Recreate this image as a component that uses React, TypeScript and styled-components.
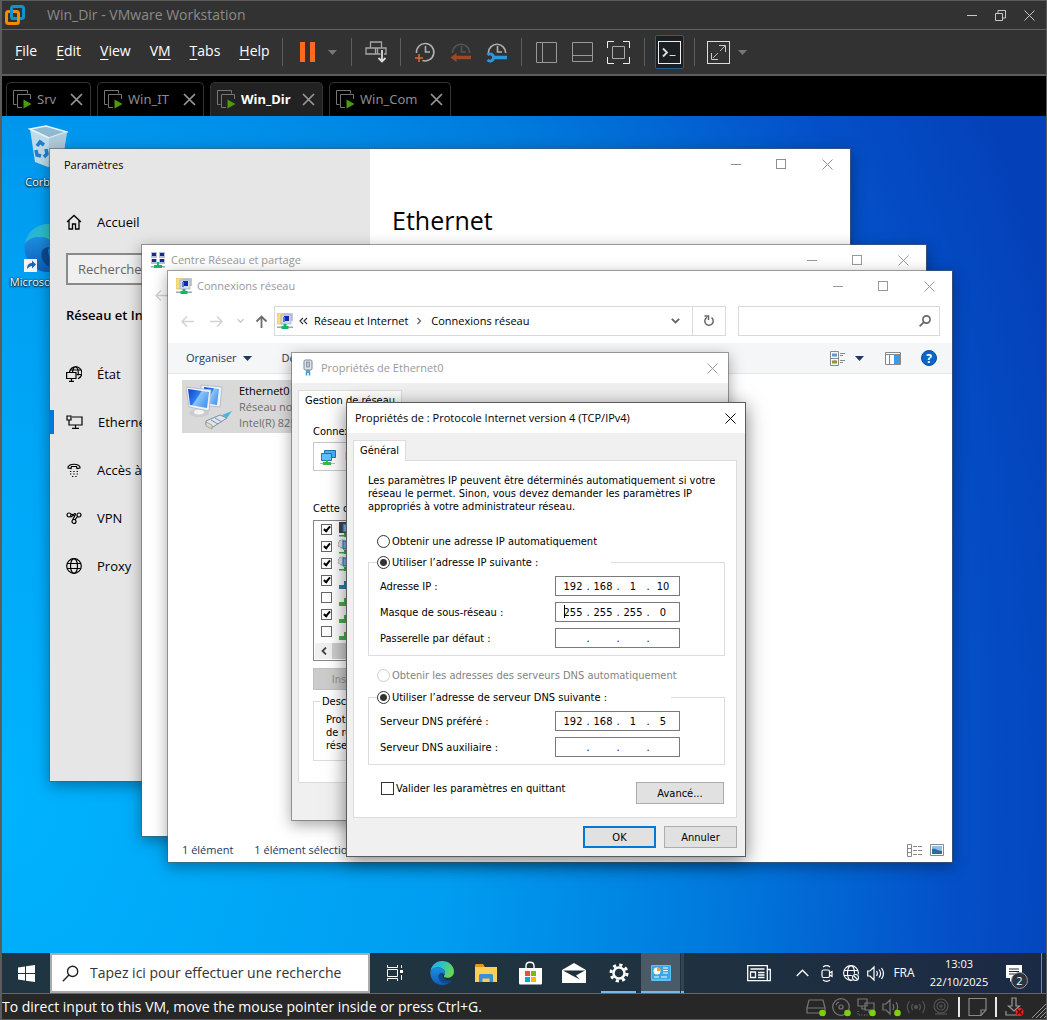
import React from "react";
import styled, { createGlobalStyle, css } from "styled-components";

const UI = '"Open Sans", "Noto Sans", sans-serif';
const DLG = '"DejaVu Sans Condensed", "Noto Sans", sans-serif';

const Global = createGlobalStyle`
  *, *::before, *::after { box-sizing: border-box; }
  html, body { margin: 0; padding: 0; background: #000; }
  body { font-family: ${UI}; font-size: 11px; line-height: 16px; color: #000; }
  button, input { font: inherit; color: inherit; }
  button { background: none; border: 0; padding: 0; margin: 0; display: flex; align-items: center; justify-content: center; }
  fieldset { margin: 0; min-width: 0; }
  p, h1, h2, ul { margin: 0; padding: 0; font-weight: 400; list-style: none; }
  svg { display: block; flex: none; }
`;

/* ---------- host application ---------- */

const Host = styled.div`
  min-height: 100vh;
  display: flex;
  flex-direction: column;
  background: #323232;
  border: solid #5c5c5c;
  border-width: 1px 1px 2px 2px;
  overflow: hidden;
`;

const HostTitle = styled.header`
  height: 29px;
  display: flex;
  align-items: center;
  padding: 0 2px 0 3px;
  border-bottom: 1px solid #636363;
  color: #8b8b8b;
`;

const HostName = styled.h1`
  flex: 1;
  margin-left: 22px;
  font-size: 14px;
  line-height: 20px;
`;

const HostControl = styled.button`
  width: 29px;
  height: 28px;
  color: #c8c8c8;
`;

const HostBar = styled.div`
  height: 46px;
  display: flex;
  align-items: center;
  border-bottom: 2px solid #5e5e5e;
`;

const MenuBar = styled.nav`
  display: flex;
  gap: 19px;
  padding: 0 12px 2px 13px;
  color: #fff;
  font-size: 14px;
  line-height: 20px;
  u { text-underline-offset: 3px; }
`;

const Separator = styled.span`
  width: 1px;
  height: 28px;
  background: #5d5d5d;
`;

const ToolGroup = styled.div<{ $gap?: number; $pad: string }>`
  display: flex;
  align-items: center;
  gap: ${(p) => p.$gap ?? 12}px;
  padding: 0 ${(p) => p.$pad};
`;

const Tool = styled.button<{ $active?: boolean }>`
  width: 24px;
  height: 34px;
  ${(p) =>
    p.$active &&
    css`
      width: 29px;
      border: 1px solid #245f8f;
      border-radius: 2px;
      background: #1c1f22;
    `}
`;

const ToolCaret = styled.button`
  width: 10px;
  height: 24px;
`;

const Tabs = styled.div`
  height: 40px;
  display: flex;
  align-items: flex-end;
  gap: 6px;
  padding-left: 4px;
  background: #000;
`;

const Tab = styled.div<{ $active?: boolean; $w: number }>`
  height: 34px;
  width: ${(p) => p.$w}px;
  display: flex;
  align-items: center;
  padding: 0 7px 1px 6px;
  border: 1px solid #333;
  border-bottom: 0;
  border-radius: 5px 5px 0 0;
  color: ${(p) => (p.$active ? "#fff" : "#8c8c8c")};
  background: ${(p) => (p.$active ? "#222" : "#000")};
  font-size: 13px;
  font-family: "Noto Sans", sans-serif;
  font-weight: ${(p) => (p.$active ? 700 : 400)};
`;

const TabName = styled.button`
  flex: 1;
  justify-content: flex-start;
  gap: 5px;
`;

/* ---------- guest desktop ---------- */

const Desktop = styled.main`
  position: relative;
  flex: 1;
  min-height: 837px;
  overflow: hidden;
  background: radial-gradient(
    ellipse 1120px 1500px at 0 680px,
    #00b3ff 0%,
    #009df1 40%,
    #0078dc 65%,
    #0450c8 85%,
    #0440b8 100%
  );
`;

const DeskIcon = styled.button<{ $y: number }>`
  position: absolute;
  left: 0;
  top: ${(p) => p.$y}px;
  width: 92px;
  flex-direction: column;
  gap: 2px;
  color: #fff;
  font-size: 11px;
  text-shadow: 0 1px 2px #000, 0 0 2px #000;
  white-space: nowrap;
`;

const Window = styled.section<{ $x: number; $y: number; $w: number; $h: number; $focus?: boolean }>`
  position: absolute;
  left: ${(p) => p.$x}px;
  top: ${(p) => p.$y}px;
  width: ${(p) => p.$w}px;
  height: ${(p) => p.$h}px;
  display: flex;
  flex-direction: column;
  overflow: hidden;
  background: #fff;
  border: 1px solid ${(p) => (p.$focus ? "#5b5b5b" : "rgba(90, 90, 90, 0.55)")};
  background-clip: padding-box;
  box-shadow: 0 4px ${(p) => (p.$focus ? "18px" : "14px")} rgba(0, 0, 0, ${(p) => (p.$focus ? 0.5 : 0.34)});
`;

const TitleRow = styled.header<{ $focus?: boolean }>`
  height: 30px;
  flex: none;
  display: flex;
  align-items: center;
  padding-left: 8px;
  background: #fff;
  color: ${(p) => (p.$focus ? "#000" : "#999")};
  white-space: nowrap;
`;

const TitleText = styled.h2<{ $gap?: number }>`
  flex: 1;
  margin-left: ${(p) => p.$gap ?? 5}px;
  font-size: 11px;
  line-height: 16px;
`;

const CaptionButton = styled.button<{ $w?: number }>`
  width: ${(p) => p.$w ?? 46}px;
  height: 30px;
`;

/* settings window */

const Settings = styled.div`
  flex: 1;
  display: flex;
`;

const Side = styled.aside`
  width: 320px;
  background: #e6e6e6;
  font-size: 13px;
`;

const SideTitle = styled.p`
  padding: 8px 14px;
  font-size: 11px;
`;

const SideLink = styled.a<{ $active?: boolean; $h?: number }>`
  height: ${(p) => p.$h ?? 48}px;
  display: flex;
  align-items: center;
  gap: 15px;
  padding-left: 16px;
  color: #000;
  text-decoration: none;
  white-space: nowrap;
  background: ${(p) =>
    p.$active ? "linear-gradient(#0078d7, #0078d7) 0 50% / 4px 24px no-repeat" : "none"};
`;

const SideSearch = styled.input`
  display: block;
  width: 288px;
  height: 32px;
  margin: 11px 16px 20px;
  padding: 0 10px;
  border: 2px solid #8a8a8a;
  border-radius: 0;
  background: #f0f0f0;
  &::placeholder { color: #666; opacity: 1; }
`;

const SideHeading = styled.h2`
  padding: 0 16px;
  margin-bottom: 25px;
  font-size: 13px;
  line-height: 20px;
  font-weight: 600;
`;

const SideTop = styled.div`
  padding-top: 21px;
`;

const SettingsMain = styled.div`
  flex: 1;
`;

const PageTitle = styled.h2`
  padding: 21px 22px;
  font-size: 25px;
  line-height: 40px;
`;

const Captions = styled.div`
  display: flex;
  justify-content: flex-end;
  color: #8f8f8f;
`;

/* explorer window */

const NavRow = styled.div`
  display: flex;
  align-items: center;
  padding: 5px 12px 7px 4px;
  color: #d2d2d2;
`;

const NavButton = styled.button<{ $w: number }>`
  width: ${(p) => p.$w}px;
  height: 30px;
`;

const Address = styled.div`
  flex: 1;
  height: 30px;
  display: flex;
  align-items: center;
  gap: 6px;
  margin: 0 12px 0 2px;
  padding-left: 2px;
  border: 1px solid #d9d9d9;
  color: #000;
  white-space: nowrap;
`;

const Crumb = styled.a`
  color: #000;
  text-decoration: none;
  & + svg { margin: 0 3px; }
`;

const AddressTools = styled.div`
  display: flex;
  margin-left: auto;
`;

const AddressEnd = styled.button<{ $line?: boolean }>`
  width: 33px;
  height: 28px;
  border-left: ${(p) => (p.$line ? "1px solid #d9d9d9" : 0)};
`;

const Grow = styled.span`
  flex: 1;
`;

const SearchBox = styled.label`
  width: 202px;
  height: 30px;
  display: flex;
  align-items: center;
  padding-right: 8px;
  border: 1px solid #d9d9d9;
  input { flex: 1; min-width: 0; border: 0; padding: 0 6px; background: none; outline: 0; }
`;

const CommandBar = styled.div`
  height: 31px;
  flex: none;
  display: flex;
  align-items: center;
  padding: 0 15px 0 18px;
  background: #f5f6f7;
  border-bottom: 1px solid #e4e7ea;
  color: #1e395b;
  white-space: nowrap;
`;

const Command = styled.button<{ $ml?: number }>`
  gap: 6px;
  margin-left: ${(p) => p.$ml ?? 0}px;
  height: 24px;
`;

const Content = styled.div`
  flex: 1;
  padding: 6px 14px;
`;

const Adapter = styled.button`
  width: 240px;
  height: 53px;
  justify-content: flex-start;
  gap: 6px;
  padding: 0 4px;
  background: #d9d9d9;
  color: #6d6d6d;
  text-align: left;
  line-height: 16px;
  white-space: nowrap;
  strong { display: block; font-weight: 400; color: #000; }
  span { display: block; }
`;

const ExplorerStatus = styled.footer`
  height: 24px;
  display: flex;
  align-items: center;
  gap: 21px;
  padding: 0 8px 0 14px;
  color: #1e395b;
`;

/* property sheets */

const Sheet = styled.div`
  flex: 1;
  display: flex;
  flex-direction: column;
  padding: 7px 8px 8px 6px;
  background: #f0f0f0;
  font-family: ${DLG};
  font-size: 11px;
  line-height: 13px;
`;

const SheetTab = styled.button`
  position: relative;
  align-self: flex-start;
  height: 21px;
  margin-bottom: -1px;
  padding: 0 6px 1px;
  background: #fff;
  border: 1px solid #dcdcdc;
  border-bottom: 0;
  white-space: nowrap;
`;

const SheetPanel = styled.div<{ $pad: string }>`
  display: flex;
  flex-direction: column;
  padding: ${(p) => p.$pad};
  background: #fff;
  border: 1px solid #dcdcdc;
`;

const Footer = styled.footer`
  display: flex;
  justify-content: flex-end;
  gap: 8px;
  padding-top: 8px;
`;

const PushButton = styled.button<{ $w: number; $default?: boolean }>`
  width: ${(p) => p.$w}px;
  height: 22px;
  flex: none;
  background: #e1e1e1;
  border: ${(p) => (p.$default ? "2px solid #0078d7" : "1px solid #adadad")};
  &:disabled { background: #ccc; border-color: #bfbfbf; color: #8f8f8f; }
`;

const Intro = styled.p`
  margin-bottom: 21px;
`;

const Choice = styled.label<{ $mt?: number; $ml?: number; $off?: boolean }>`
  display: flex;
  align-items: center;
  gap: 2px;
  height: 14px;
  margin-top: ${(p) => p.$mt ?? 0}px;
  margin-left: ${(p) => p.$ml ?? 0}px;
  color: ${(p) => (p.$off ? "#838383" : "#000")};
  white-space: nowrap;
`;

const Radio = styled.input.attrs({ type: "radio" })`
  appearance: none;
  width: 13px;
  height: 13px;
  flex: none;
  margin: 0;
  border: 1px solid #333;
  border-radius: 50%;
  background: #fff;
  &:checked { background: radial-gradient(circle, #333 0 3px, #fff 4px); }
  &:disabled { border-color: #ccc; }
`;

const Check = styled.input.attrs({ type: "checkbox" })<{ $small?: boolean }>`
  appearance: none;
  width: ${(p) => (p.$small ? 11 : 13)}px;
  height: ${(p) => (p.$small ? 11 : 13)}px;
  flex: none;
  margin: 0;
  border: 1px solid ${(p) => (p.$small ? "#666" : "#333")};
  background: #fff;
  display: grid;
  place-items: center;
  &:checked::after {
    content: "";
    width: 4px;
    height: 7px;
    margin-bottom: 2px;
    border: solid #000;
    border-width: 0 2px 2px 0;
    transform: rotate(40deg);
  }
`;

const Group = styled.fieldset<{ $mt: number }>`
  margin-top: ${(p) => p.$mt}px;
  padding: 7px 44px 7px 11px;
  border: 1px solid #dcdcdc;
`;

const Legend = styled.legend<{ $w: number }>`
  width: ${(p) => p.$w}px;
  margin-left: -3px;
  padding: 0;
`;

const IpRow = styled.div`
  display: flex;
  align-items: center;
  justify-content: space-between;
  & + & { margin-top: 6px; }
`;

const IpBox = styled.div`
  width: 125px;
  height: 20px;
  display: flex;
  align-items: center;
  padding-left: 5px;
  border: 1px solid #7a7a7a;
  background: #fff;
`;

const Octet = styled.input`
  width: 24px;
  height: 16px;
  padding: 0;
  border: 0;
  background: none;
  text-align: center;
  outline: 0;
`;

const Dot = styled.span`
  width: 6px;
  text-align: center;
`;

const CaretBox = styled.span`
  position: relative;
  display: flex;
  &::before {
    content: "";
    position: absolute;
    left: 3px;
    top: 1px;
    width: 1px;
    height: 13px;
    background: #000;
  }
`;

const LastRow = styled.div`
  display: flex;
  justify-content: space-between;
  align-items: center;
  margin: 17px 1px 0 13px;
`;

const LastChoice = styled(Choice)`
  padding-bottom: 9px;
  height: 22px;
`;

const DeviceBox = styled.div`
  height: 29px;
  display: flex;
  align-items: center;
  gap: 8px;
  margin: 4px 0 31px;
  padding-left: 6px;
  border: 1px solid #c8c8c8;
  white-space: nowrap;
`;

const ItemList = styled.div`
  height: 141px;
  display: flex;
  flex-direction: column;
  margin: 5px 0 7px;
  border: 1px solid #828790;
`;

const Item = styled.label`
  height: 17px;
  display: flex;
  align-items: center;
  gap: 6px;
  padding-left: 7px;
  white-space: nowrap;
`;

const ScrollTrack = styled.div`
  height: 16px;
  margin: auto 1px 1px;
  display: flex;
  background: #f0f0f0;
`;

const ScrollButton = styled.button`
  width: 17px;
`;

const ScrollThumb = styled.span`
  width: 260px;
  background: #cdcdcd;
`;

const Description = styled.fieldset`
  height: 66px;
  margin-top: 5px;
  padding: 5px 12px;
  border: 1px solid #dcdcdc;
  legend { padding: 0 2px; margin-left: -6px; }
  p { white-space: pre; }
`;

/* guest task bar */

const TaskBar = styled.div`
  height: 40px;
  flex: none;
  display: flex;
  background: linear-gradient(90deg, #1f3642, #20323f 60%, #1b2a44);
  color: #fff;
`;

const Task = styled.button<{ $w?: number; $open?: boolean; $active?: boolean }>`
  width: ${(p) => p.$w ?? 44}px;
  height: 40px;
  margin-left: ${(p) => (p.$open ? 5 : 0)}px;
  background: ${(p) => (p.$active ? "#4b5a67" : "none")};
  border-bottom: ${(p) => (p.$open ? "2px solid #76b9ed" : 0)};
  background-clip: padding-box;
  padding-top: ${(p) => (p.$open ? 2 : 0)}px;
`;

const TaskStack = styled.span`
  width: 3px;
  margin-left: 1px;
  background: #35444f;
  border-bottom: 2px solid #76b9ed;
`;

const TaskSearch = styled.label`
  width: 320px;
  display: flex;
  align-items: center;
  gap: 11px;
  padding-left: 10px;
  background: #fff;
  border: 2px solid #a9abac;
  color: #333;
  font-size: 14px;
  input { flex: 1; min-width: 0; border: 0; padding: 0; background: none; outline: 0; }
  input::placeholder { color: #333; opacity: 1; }
`;

const Tray = styled.div`
  flex: 1;
  display: flex;
  align-items: center;
  justify-content: flex-end;
  font-size: 12px;
`;

const TrayButton = styled.button<{ $w: number }>`
  width: ${(p) => p.$w}px;
  height: 40px;
`;

const Clock = styled.button`
  width: 76px;
  height: 40px;
  flex-direction: column;
  font-size: 11px;
  line-height: 18px;
`;

const ShowDesktop = styled.span`
  width: 5px;
  height: 40px;
  border-left: 1px solid #7d8794;
`;

const Badge = styled.span`
  position: absolute;
  right: 13px;
  bottom: 4px;
  width: 17px;
  height: 17px;
  border: 1px solid #999;
  border-radius: 50%;
  background: #2d3440;
  font-size: 11px;
  line-height: 15px;
`;

const Notify = styled.button`
  position: relative;
  width: 44px;
  height: 40px;
  padding-right: 10px;
`;

/* host status bar */

const StatusBar = styled.footer`
  height: 26px;
  display: flex;
  align-items: center;
  border-top: 1px solid #666;
  background: #272727;
  color: #fff;
  font-size: 14px;
`;

const StatusIcons = styled.div`
  flex: 1;
  display: flex;
  align-items: center;
  justify-content: flex-end;
`;

const StatusSeparator = styled.span`
  width: 2px;
  height: 20px;
  background: #e8e8e8;
`;

/* ---------- drawings ---------- */

const Svg = ({ w, h = w, vb, children, sw = 1, fill = "none" }: {
  w: number; h?: number; vb?: string; children: React.ReactNode; sw?: number; fill?: string;
}) => (
  <svg width={w} height={h} viewBox={vb ?? `0 0 ${w} ${h}`} fill={fill} stroke="currentColor" strokeWidth={sw} aria-hidden="true">
    {children}
  </svg>
);

const Logo = () => (
  <svg width="20" height="20" viewBox="0 0 20 20" fill="none" strokeWidth="3">
    <rect x="6.500" y="1.500" width="12" height="12" rx="2" stroke="#0f93cf" />
    <rect x="1.500" y="6.500" width="12" height="12" rx="2" stroke="#f38b00" />
    <path d="M6.500 10V5M6.500 13.500H10" stroke="#0f93cf" />
  </svg>
);

const MinIcon = () => <Svg w={10}><path d="M0 5.500h10" /></Svg>;
const MaxIcon = () => <Svg w={10}><rect x=".5" y=".5" width="9" height="9" /></Svg>;
const CloseIcon = ({ w = 11 }: { w?: number }) => (
  <Svg w={w} vb="0 0 11 11"><path d="M.5.5l10 10M10.500.5l-10 10" /></Svg>
);
const RestoreIcon = () => (
  <Svg w={11}><path d="M.5 3.500h7v7h-7zM3 3V.5h7.500V8H8" /></Svg>
);
const CaretDown = ({ color }: { color: string }) => (
  <svg width="9" height="5" viewBox="0 0 9 5"><path d="M0 0h9L4.500 5z" fill={color} /></svg>
);

const VmIcon = () => (
  <svg width="19" height="19" viewBox="0 0 19 19" fill="none" stroke="#777">
    <path d="M3.500 14.500h-3V.5h14v3" />
    <path d="M9 17.500H4.500v-13h13V9" />
    <path d="M10.500 9.500l8 4.500-8 4.500z" fill="#4b9b0c" stroke="none" />
  </svg>
);

const KeysIcon = () => (
  <svg width="22" height="22" viewBox="0 0 22 22" fill="none" stroke="#a6a6a6" strokeWidth="1.300">
    <path d="M5.500 1h11v6h-11zM1 7h9.500v6H1zM10.500 13h5M12.500 13V7H21v6h-2" />
    <path d="M17 9v11M13.500 17L17 20.500l3.500-3.500" stroke="#ddd" strokeWidth="1.800" />
  </svg>
);

const ClockIcon = ({ kind }: { kind: "add" | "back" | "wrench" }) => (
  <svg width="22" height="22" viewBox="0 0 22 22" fill="none" stroke={kind === "back" ? "#555" : "#b0b0b0"} strokeWidth="1.600">
    {kind === "add" ? <path d="M2.500 12a8.700 8.700 0 1 1 6 7.500" /> : <path d="M2.300 12a8.700 8.700 0 1 1 17.400 0" />}
    <path d="M11.500 5v6H16" />
    {kind === "add" && <path d="M5 13v8M1 17h8" stroke="#e0652c" />}
    {kind === "back" && <path d="M4 16.500h17" stroke="#9c4a22" strokeWidth="3.500" />}
    {kind === "back" && <path d="M6.500 12v9L.5 16.500z" fill="#9c4a22" stroke="none" />}
    {kind === "wrench" && <path d="M7 16.500h14" stroke="#2b98dd" strokeWidth="3.500" />}
    {kind === "wrench" && <path d="M1.500 14c2-2 6-1 6 2.500s-4 4.500-6 2.500" stroke="#2b98dd" strokeWidth="2.800" />}
  </svg>
);

const SideViewIcon = () => <Svg w={21}><path d="M.5.500h20v20H.500zM6.500.5v20" stroke="#999" /></Svg>;
const BottomViewIcon = () => <Svg w={21}><path d="M.5.500h20v19H.500zM.5 13.500h20" stroke="#999" /></Svg>;
const FullIcon = () => (
  <Svg w={23}>
    <path d="M.5 7V.5H7M16 .5h6.500V7M22.500 16v6.500H16M7 22.500H.5V16" stroke="#eee" />
    <path d="M5.500 5.500h12v12h-12z" stroke="#aaa" />
  </Svg>
);
const ConsoleIcon = () => (
  <Svg w={23}>
    <rect x=".5" y=".5" width="22" height="22" stroke="#eee" />
    <path d="M5 7.500l4 4-4 4" stroke="#ddd" strokeWidth="1.800" />
    <path d="M11.500 14.500h6" stroke="#ddd" />
  </Svg>
);
const ExpandIcon = () => (
  <Svg w={23}>
    <rect x=".5" y=".5" width="22" height="22" stroke="#ddd" />
    <path d="M12 4.500h6.500V11M11 18.500H4.500V12" stroke="#ccc" />
    <path d="M18 5L5 18" stroke="#bbb" strokeDasharray="7 3" />
  </Svg>
);

const BinIcon = () => (
  <svg width="40" height="48" viewBox="-1 -1 40 48">
    <path d="M1 4l5 33 13 5 14-4 5-31z" fill="#cfdfe8" opacity=".92" />
    <path d="M1 4L17 1l21 6-18 6z" fill="#8fb9d2" stroke="#e8f4fa" strokeWidth="1.500" />
    <path d="M20 13l18-6-5 31-14 4z" fill="#a9c6d6" opacity=".8" />
    <g fill="none" stroke="#1d7fd0" strokeWidth="3.500"><path d="M8 21l3-4 4 3" /><path d="M7 25l1 5 4 1" /><path d="M17 24l1 5-3 3" /></g>
  </svg>
);

const EdgeIcon = ({ size }: { size: number }) => (
  <svg width={size} height={size} viewBox="0 0 24 24">
    <defs>
      <linearGradient id={`ea${size}`} x1="0" x2="1" y1="0" y2=".4"><stop offset="0" stopColor="#26a9ea" /><stop offset=".5" stopColor="#2cc3c8" /><stop offset="1" stopColor="#63d65a" /></linearGradient>
      <linearGradient id={`eb${size}`} x1="0" x2="0" y1="0" y2="1"><stop offset="0" stopColor="#1b8fe0" /><stop offset="1" stopColor="#0f5cb8" /></linearGradient>
    </defs>
    <path d="M.4 10.500C1.200 4.500 6 0 12 0c7 0 12 5 12 10.500 0 4-3 6.300-6.500 6.300-3 0-4-1-3.500-2 1-1.600 1-2.300 1-3C15 8.500 11.500 6.500 8 6.500c-4 0-7 2-7.600 4z" fill={`url(#ea${size})`} />
    <path d="M.4 10.500C1.200 8 4.500 6.300 8 6.500c4 0 7 2.500 7 5.300 0 .8-.2 1.500-.8 2.300C13 11 9.500 11.500 8.700 14.500 8 18 11 22 15.500 22.200c2 .1 4-.5 6-1.900C19 23 15.500 24 12 24 5 24-.3 18 .4 10.500z" fill={`url(#eb${size})`} />
    <path d="M8.700 14.500C8 18 11 22 15.500 22.200c2.500 0 5-1 6.700-3.200-3 1.500-9 1-10-4.500-.3-1.500.2-2.500.8-2.700-2-.5-3.800.7-4.300 2.700z" fill="#0c4a94" />
  </svg>
);

const EdgeShortcut = () => (
  <svg width="48" height="48" viewBox="0 0 48 48">
    <g><EdgeIcon size={48} /></g>
    <rect x="0" y="35" width="13" height="13" fill="#f4f4f4" />
    <path d="M3 45c0-4 2-6 5-6v-2.500l4 4-4 4V42c-2 0-3 1-5 3z" fill="#1d64b5" />
  </svg>
);

const HomeIcon = () => <Svg w={16} sw={1.3}><path d="M1 8l7-6.500L15 8M3 6.500V15h3.500v-5h3v5H13V6.500" /></Svg>;
const GlobePcIcon = () => (
  <Svg w={16} sw={1.2}>
    <path d="M3.500 6a6.200 6.200 0 1 1 8.500 6.700M6.500 6C7 2.500 8 .8 9.500.8S13 4 12 9.500M4 4h11M10.500 8.500h5" />
    <path d="M.6 6.500h9.400v6H.6zM5.500 12.500V15M3 15.300h5" />
  </Svg>
);
const MonitorIcon = () => (
  <Svg w={17} h={14} sw={1.2}><path d="M6 2h10v8H3V6M1 1h4v4H1zM3 5v2M9.500 10v3M6 13.300h7" /></Svg>
);
const PhoneIcon = () => (
  <Svg w={16} sw={1.2}>
    <path d="M2 6C1 1 15 1 14 6l-3 .5-.5-2h-5l-.5 2z" />
    <path d="M4 9.500h8M4 12h8M6 14.500h5" strokeDasharray="1.300 2" />
  </Svg>
);
const VpnIcon = () => (
  <Svg w={16} sw={1.2}><circle cx="3" cy="5" r="2" /><circle cx="13" cy="5" r="2" /><circle cx="8" cy="11.500" r="2" /><path d="M4.500 6.500C6 8 7 3.500 9 3.500s-3 6-2 6.500M11.500 6.500L9 9.800M5 4.500c2-1 3 1 4 2" /></Svg>
);
const GlobeIcon = ({ w = 16 }: { w?: number }) => (
  <Svg w={w} vb="0 0 16 16" sw={1.2}><circle cx="8" cy="8" r="7.300" /><ellipse cx="8" cy="8" rx="3.500" ry="7.300" /><path d="M1.300 5.500h13.400M1.300 10.500h13.400" /></Svg>
);

const CenterIcon = () => (
  <svg width="16" height="16" viewBox="0 0 16 16">
    <g fill="#b9bfcc"><path d="M1 0h6v6H1zM9 0h6v6H9zM1 7h6v5H1zM9 7h6v5H9z" /></g>
    <g fill="#1a25a0"><path d="M2 1h4v3H2zM10 1h4v3h-4zM2 7h4v3H2zM10 7h4v3h-4z" /></g>
    <path d="M1 14h14v1.500H1z" fill="#9aa" /><path d="M7 10h2v3h3v3H4v-3h3z" fill="#10b86e" />
  </svg>
);
const FolderNetIcon = () => (
  <svg width="16" height="16" viewBox="0 0 16 16">
    <path d="M0 0h7v11H0z" fill="#f6df83" stroke="#d9b84a" strokeWidth=".6" />
    <rect x="7" y="0" width="9" height="8" fill="#c0c7d6" /><rect x="4" y="2" width="10" height="9" fill="#d5dae4" stroke="#97a0b4" strokeWidth=".6" />
    <path d="M7 3h5v5H7z" fill="#1622b5" /><path d="M6 4h2v5H6z" fill="#4d7de8" />
    <path d="M0 13.500h16V15H0z" fill="#9aa" /><path d="M6.500 11h3v2h2v3h-7v-3h2z" fill="#10b86e" />
  </svg>
);
const PlugIcon = () => (
  <svg width="16" height="18" viewBox="-2 0 16 18">
    <rect x="2" y="1" width="8" height="10" rx="1.500" fill="#dfe5ea" stroke="#77838f" />
    <rect x="4.500" y="3" width="3" height="5" fill="#b3c6d6" stroke="#77838f" strokeWidth=".7" />
    <path d="M4 11h4v3H4z" fill="#8295a5" /><path d="M4.500 13v3.500M7.500 13v3.500" stroke="#28a5dc" strokeWidth="1.500" />
  </svg>
);
const ArrowIcon = ({ dir }: { dir: "l" | "r" | "u" }) => (
  <svg width="13" height="13" viewBox="0 0 13 13" fill="none" stroke="currentColor" strokeWidth="1.500">
    {dir === "l" && <path d="M13 6.500H1M6 1.500l-5 5 5 5" />}
    {dir === "r" && <path d="M0 6.500h12M7 1.500l5 5-5 5" />}
    {dir === "u" && <path d="M6.500 13V1.500M1.500 6.500l5-5 5 5" stroke="#6d6d6d" strokeWidth="1.800" />}
  </svg>
);
const Chevron = ({ color, w = 9 }: { color: string; w?: number }) => (
  <svg width={w} height="6" viewBox="0 0 9 6" fill="none" stroke={color} strokeWidth="1.800"><path d="M.8.8l3.700 3.700L8.200.8" /></svg>
);
const SmallRight = () => (
  <svg width="5" height="8" viewBox="0 0 5 8" fill="none" stroke="#666" strokeWidth="1.300"><path d="M.5 1l3 3-3 3" /></svg>
);
const DoubleLeft = () => (
  <svg width="9" height="8" viewBox="0 0 9 8" fill="none" stroke="#333" strokeWidth="1.200"><path d="M4 1L1 4l3 3M8 1L5 4l3 3" /></svg>
);
const RefreshIcon = () => (
  <svg width="12" height="12" viewBox="0 0 12 12" fill="none" stroke="#666" strokeWidth="1.500"><path d="M8.500 2.700a4.200 4.200 0 1 1-4.500-.3" /><path d="M1.500 1h4v4" /></svg>
);
const MagnifyIcon = ({ w, color, sw }: { w: number; color: string; sw: number }) => (
  <svg width={w} height={w} viewBox="0 0 16 16" fill="none" stroke={color} strokeWidth={sw}><circle cx="10" cy="6" r="4.800" /><path d="M6.500 9.500L.8 15.200" /></svg>
);
const ViewIcon = () => (
  <svg width="16" height="15" viewBox="0 0 16 15" fill="none" stroke="#8a8a8a">
    <path d="M.5.500h8v14h-8zM.5 7.500h8" /><path d="M2 2.500h5v3H2z" fill="#5a9bd8" stroke="none" /><path d="M2 9.500h5v3H2z" fill="#6aa84a" stroke="none" /><path d="M4 9.500h2v2H4z" fill="#e07020" stroke="none" />
    <path d="M10 2.500h5M10 4.500h3M10 9.500h5M10 11.500h3" />
  </svg>
);
const PaneIcon = () => (
  <svg width="16" height="13" viewBox="0 0 16 13"><path d="M.5.500h15v12H.500zM.5 2.500h15M4.500 3v9" fill="#fff" stroke="#888" /><path d="M9 3h6v9H9z" fill="#3c9be8" /></svg>
);
const HelpIcon = () => (
  <svg width="16" height="16" viewBox="0 0 16 16"><circle cx="8" cy="8" r="7.500" fill="#0a66c8" stroke="#084f9c" /><text x="8" y="12.500" textAnchor="middle" fontFamily="Open Sans" fontWeight="700" fontSize="12" fill="#fff">?</text></svg>
);
const AdapterIcon = () => (
  <svg width="47" height="46" viewBox="0 0 47 46">
    <defs><linearGradient id="scr" x2="1" y2=".6"><stop offset="0" stopColor="#0a43c8" /><stop offset=".5" stopColor="#2d7df0" /><stop offset=".55" stopColor="#8cc4fb" /><stop offset="1" stopColor="#4b98f2" /></linearGradient></defs>
    <path d="M15 1l21 2-2 20-19-2z" fill="#eef2f6" stroke="#b7bec6" /><path d="M18 3l15 2-2 16-12-2z" fill="url(#scr)" />
    <ellipse cx="13" cy="29" rx="10" ry="4" fill="#c9cdd1" /><ellipse cx="13" cy="28" rx="5" ry="2.500" fill="#f4f4f4" />
    <path d="M0 3l25 3-2 21L3 23z" fill="#eef2f6" stroke="#b7bec6" /><path d="M2 5l21 3-2 16L4 21z" fill="url(#scr)" />
    <path d="M20 37l14-6 7 3-14 9-7-2z" fill="#dfe6ee" stroke="#7e8fa3" /><path d="M25 36l7 4M29 34l7 4" stroke="#7e8fa3" /><path d="M36 31l10-4-5 7z" fill="#47b6de" /><path d="M20 38l6 3v4l-6-3z" fill="#dcdcc4" stroke="#8a8a6a" strokeWidth=".6" />
  </svg>
);
const ListViewIcon = () => (
  <Svg w={16} h={13}><path d="M.5.500h4v12h-4zM.5 4.500h4M.5 8.500h4M6 2.500h4M11 2.500h4M6 6.500h4M11 6.500h4M6 10.500h4M11 10.500h4" stroke="#888" /></Svg>
);
const ThumbViewIcon = () => (
  <svg width="14" height="12" viewBox="0 0 14 12"><path d="M.5.500h13v11H.500z" fill="#fff" stroke="#888" /><path d="M2 2h10v8H2z" fill="#8cc0ee" /><path d="M2 5c4-1 5 2 10 2v3H2z" fill="#2c6f8c" /></svg>
);
const NetCardIcon = () => (
  <svg width="17" height="16" viewBox="0 0 17 16">
    <path d="M4.500 1.500h11v7h-11z" fill="#4db2f2" stroke="#2173b8" /><path d="M1.500 4.500h10v7h-10z" fill="#5fc0fa" stroke="#2173b8" />
    <path d="M0 14h15v1H0z" fill="#bbb" /><path d="M6 11h2v2h3v3H3v-3h3z" fill="#40b840" />
  </svg>
);
const ServiceIcon = ({ kind }: { kind: number }) => (
  <svg width="16" height="16" viewBox="0 0 16 16">
    {kind === 0 && <path d="M1 0h7v11H1z" fill="#444" />}
    {kind === 1 && <circle cx="4" cy="5" r="4" fill="#dde4ea" stroke="#8494a2" strokeDasharray="2 1" />}
    {kind < 2 && <path d="M5 2h10v8H5z" fill="#6fc0f2" stroke="#2a6fa8" />}
    {kind < 2 && <path d="M1 13h14v1.500H1zM6 11h5v4H6z" fill="#3fae49" />}
    {kind === 2 && <path d="M1 12h5V8h8v8H1z" fill="#1c8aa8" />}
    {kind === 3 && <path d="M1 12h5V8h8v8H1z" fill="#3fb54a" />}
  </svg>
);

const WinLogo = () => (
  <svg width="17" height="17" viewBox="0 0 17 17" fill="#fff"><path d="M0 2.400l7-1V8H0zM8 1.200L17 0v8H8zM0 9h7v6.600l-7-1zM8 9h9v8l-9-1.200z" /></svg>
);
const TaskViewIcon = () => (
  <Svg w={18} h={16}><path d="M1.500 0v2.500h10V0M1.500 16v-2.500h10V16M1.500 4.500h10v7h-10zM15.500 0v3M15.500 10v5" /><path d="M14 5h3v3h-3z" fill="#fff" stroke="none" /></Svg>
);
const ExplorerIcon = () => (
  <svg width="22" height="19" viewBox="0 0 22 19"><path d="M0 1.500C0 .7.700 0 1.500 0H8l2 3H0z" fill="#e39a12" /><path d="M0 3h22v15H0z" fill="#fdcf56" /><path d="M4 18v-6.500c0-.8.700-1.500 1.500-1.500h11c.8 0 1.500.7 1.500 1.500V18h-3.500v-3.500h-7V18z" fill="#3b8fd9" /></svg>
);
const StoreIcon = () => (
  <svg width="24" height="24" viewBox="0 0 24 24"><path d="M8 7V5c0-5 8-5 8 0v2" fill="none" stroke="#fff" strokeWidth="1.400" /><path d="M1 7h23v15c0 1-.6 1.500-1.500 1.500h-20C1.600 23.500 1 23 1 22z" fill="#fff" /><path d="M7 10h5v5H7z" fill="#f25022" /><path d="M13 10h5v5h-5z" fill="#7fba00" /><path d="M7 16h5v5H7z" fill="#00a4ef" /><path d="M13 16h5v5h-5z" fill="#ffb900" /></svg>
);
const MailIcon = () => (
  <svg width="24" height="20" viewBox="0 0 24 20"><path d="M0 7l12-7 12 7v13H0z" fill="#fff" /><path d="M1 7.500h22L14 12.500l4 4-8-4z" fill="#20323f" /></svg>
);
const GearIcon = () => (
  <svg width="20" height="20" viewBox="0 0 20 20" fill="none" stroke="#fff"><circle cx="10" cy="10" r="5.500" strokeWidth="2.500" /><circle cx="10" cy="10" r="8" strokeWidth="3" strokeDasharray="3.140 3.140" /></svg>
);
const ControlPanelIcon = () => (
  <svg width="20" height="16" viewBox="0 0 20 16"><rect width="20" height="16" rx="1" fill="#5cc2f5" /><rect x="1" y="1" width="18" height="13" fill="#3da5e0" /><circle cx="6" cy="6" r="3.500" fill="#fff" /><path d="M6 6V2.500A3.500 3.500 0 0 1 9.500 6z" fill="#f4a020" /><path d="M12 3h5M12 5.500h5M12 8h5M3 12h5M10 12h6" stroke="#fff" /></svg>
);
const NewsIcon = () => (
  <Svg w={24} h={17} sw={1.3}><path d="M.7.700h19.600v15H.700zM20.300 4.500h3v11.200h-4M3.500 4h14M3.500 7h5v5.500h-5zM11 7.500h6.500M11 10h6.500M11 12.500h6.500" /></Svg>
);
const UpIcon = () => <Svg w={13} h={8} sw={1.3}><path d="M.7 7l5.800-5.800L12.300 7" /></Svg>;
const MeetIcon = () => (
  <Svg w={12} h={17} sw={1.2}><rect x="1" y="5" width="7.500" height="7.500" rx="1.500" /><path d="M8.500 8l2.500-1.500v5L8.500 10M2 2c2-1.500 5-1.500 7 0M2 15c2 1.500 5 1.500 7 0" /></Svg>
);
const NoNetIcon = () => (
  <svg width="17" height="17" viewBox="0 0 17 17" fill="none" stroke="#fff" strokeWidth="1.100"><circle cx="8" cy="8" r="7.400" /><ellipse cx="8" cy="8" rx="3.500" ry="7.400" /><path d="M1 5.500h14M1 10.500h14" /><circle cx="12.500" cy="12.500" r="4" fill="#1c2d42" stroke="none" /><circle cx="12.500" cy="12.500" r="3" /><path d="M10.500 10.500l4 4" /></svg>
);
const SpeakerIcon = () => (
  <svg width="17" height="17" viewBox="0 0 17 17" fill="none" stroke="#fff" strokeWidth="1.200"><path d="M.7 6H3l4-4v13l-4-4H.700zM9.500 6c1 1.500 1 3.500 0 5M12 4.500c2 2.500 2 5.500 0 8M14.500 3c2.500 3.500 2.500 7.500 0 11" /></svg>
);
const MessageIcon = () => (
  <svg width="16" height="17" viewBox="0 0 16 17"><path d="M0 0h16v13H8l-4 4v-4H0z" fill="#fff" /><path d="M3 4h10M3 6.500h10M3 9h7" stroke="#1b2b40" /></svg>
);

const DeviceIcon = ({ kind, on }: { kind: string; on?: boolean }) => (
  <svg width="25" height="22" viewBox="0 0 25 22" fill="none" stroke="#777" strokeWidth="1.200">
    {kind === "disk" && <path d="M5 4h14l2 8H3zM3 12v5h18v-5" />}
    {kind === "cd" && <g><circle cx="12" cy="11" r="8.300" /><circle cx="12" cy="11" r="2" /><path d="M7 9a5 5 0 0 1 3-3" /></g>}
    {kind === "net" && <g><path d="M4 3h9v7H4zM11 7h9v7h-9zM8 10v3h4M15 14v3" /><path d="M4 15v4h10" strokeDasharray="1 1.500" /></g>}
    {kind === "sound" && <path d="M4 8h3l4-4v14l-4-4H4zM14 8c1 2 1 4 0 6M17 6c2 3 2 7 0 10" />}
    {kind === "usb" && <g stroke="#555"><circle cx="12" cy="11" r="1.500" fill="#555" /><path d="M9 8c-2 2-2 4 0 6M15 8c2 2 2 4 0 6M5.500 5c-3 4-3 8 0 12M18.500 5c3 4 3 8 0 12" /></g>}
    {kind === "cam" && <g stroke="#555"><circle cx="12" cy="10" r="7" /><circle cx="12" cy="10" r="4" /><circle cx="12" cy="10" r="1" /><path d="M6 18h12" /></g>}
    {kind === "note" && <path d="M4 2.500h17V14l-5 5.500H4zM21 14h-5v5.500" stroke="#888" />}
    {kind === "down" && <g stroke="#999"><path d="M10 2h4v8h3.500L12 15l-5.500-5H10zM4 15v4h12" /><circle cx="17.500" cy="16" r="4" fill="#e02a20" stroke="none" /><path d="M15 13.500l5 5M20 13.500l-5 5" stroke="#500" /></g>}
    {on && <circle cx="18.500" cy="17" r="3.300" fill="#7cd014" stroke="none" />}
  </svg>
);
const Grip = () => (
  <Svg w={15} h={22}><path d="M1 22L15 8M5 22l10-10M9 22l6-6M13 22l2-2" stroke="#999" /></Svg>
);

/* ---------- composite pieces ---------- */

const WindowControls = () => (
  <>
    <CaptionButton $w={45} aria-label="Réduire"><MinIcon /></CaptionButton>
    <CaptionButton aria-label="Agrandir"><MaxIcon /></CaptionButton>
    <CaptionButton aria-label="Fermer"><CloseIcon /></CaptionButton>
  </>
);

const IpField = ({ id, label, octets, caret }: { id: string; label: string; octets: string[]; caret?: boolean }) => (
  <IpRow>
    <label htmlFor={`${id}-0`}>{label}</label>
    <IpBox role="group" aria-label={label}>
      {octets.map((o, i) => {
        const box = <Octet id={`${id}-${i}`} defaultValue={o} aria-label={i ? `${label} ${i + 1}` : undefined} />;
        return (
          <React.Fragment key={i}>
            {i > 0 && <Dot>.</Dot>}
            {caret && i === 0 ? <CaretBox>{box}</CaretBox> : box}
          </React.Fragment>
        );
      })}
    </IpBox>
  </IpRow>
);

const hostTabs = [
  { name: "Srv", w: 85 },
  { name: "Win_IT", w: 107 },
  { name: "Win_Dir", w: 113, active: true },
  { name: "Win_Com", w: 122 },
];

const menus = [
  ["", "F", "ile"], ["", "E", "dit"], ["", "V", "iew"], ["V", "M", ""], ["", "T", "abs"], ["", "H", "elp"],
];

const sideItems = [
  { name: "État", icon: <GlobePcIcon /> },
  { name: "Ethernet", icon: <MonitorIcon />, active: true },
  { name: "Accès à distance", icon: <PhoneIcon /> },
  { name: "VPN", icon: <VpnIcon /> },
  { name: "Proxy", icon: <GlobeIcon /> },
];

const services = [
  { name: "Client pour les réseaux Microsoft", on: true, kind: 0 },
  { name: "Partage de fichiers et imprimantes", on: true, kind: 1 },
  { name: "Planificateur de paquets QoS", on: true, kind: 1 },
  { name: "Protocole Internet version 4 (TCP/IPv4)", on: true, kind: 2 },
  { name: "Protocole de multiplexage", on: false, kind: 3 },
  { name: "Pilote de protocole LLDP Microsoft", on: true, kind: 3 },
  { name: "Protocole Internet version 6 (TCP/IPv6)", on: false, kind: 3 },
];

const none = ["", "", "", ""];

export default function App() {
  return (
    <Host>
      <Global />
      <HostTitle>
        <Logo />
        <HostName>Win_Dir - VMware Workstation</HostName>
        <HostControl aria-label="Minimize"><MinIcon /></HostControl>
        <HostControl aria-label="Restore"><RestoreIcon /></HostControl>
        <HostControl aria-label="Close"><CloseIcon /></HostControl>
      </HostTitle>

      <HostBar>
        <MenuBar>
          {menus.map(([a, k, b]) => (
            <button key={a + k + b}><span>{a}<u>{k}</u>{b}</span></button>
          ))}
        </MenuBar>
        <Separator />
        <ToolGroup $gap={8} $pad="13px">
          <Tool aria-label="Suspend">
            <svg width="16" height="20" viewBox="0 0 16 20" fill="#ff6b1c"><path d="M0 0h5v20H0zM10 0h5v20h-5z" /></svg>
          </Tool>
          <ToolCaret aria-label="Power options"><CaretDown color="#777" /></ToolCaret>
        </ToolGroup>
        <Separator />
        <ToolGroup $pad="12px"><Tool aria-label="Send Ctrl+Alt+Del"><KeysIcon /></Tool></ToolGroup>
        <Separator />
        <ToolGroup $pad="12px">
          <Tool aria-label="Take snapshot"><ClockIcon kind="add" /></Tool>
          <Tool aria-label="Revert snapshot"><ClockIcon kind="back" /></Tool>
          <Tool aria-label="Manage snapshots"><ClockIcon kind="wrench" /></Tool>
        </ToolGroup>
        <Separator />
        <ToolGroup $pad="13px">
          <Tool aria-label="Show library"><SideViewIcon /></Tool>
          <Tool aria-label="Show thumbnails"><BottomViewIcon /></Tool>
          <Tool aria-label="Full screen"><FullIcon /></Tool>
        </ToolGroup>
        <Separator />
        <ToolGroup $pad="10px"><Tool $active aria-label="Console view"><ConsoleIcon /></Tool></ToolGroup>
        <Separator />
        <ToolGroup $gap={7} $pad="12px">
          <Tool aria-label="Stretch"><ExpandIcon /></Tool>
          <ToolCaret aria-label="Stretch options"><CaretDown color="#777" /></ToolCaret>
        </ToolGroup>
      </HostBar>

      <Tabs>
        {hostTabs.map((t) => (
          <Tab key={t.name} $active={t.active} $w={t.w}>
            <TabName><VmIcon />{t.name}</TabName>
            <button aria-label={`Close ${t.name}`}><Svg w={13} sw={1.7}><path d="M1 1l11 11M12 1L1 12" stroke="#999" /></Svg></button>
          </Tab>
        ))}
      </Tabs>

      <Desktop>
        <DeskIcon $y={8}><BinIcon />Corbeille</DeskIcon>
        <DeskIcon $y={108}><EdgeShortcut />Microsoft Edge</DeskIcon>

        <Window $x={47} $y={32} $w={802} $h={634}>
          <Settings>
            <Side>
              <SideTitle>Paramètres</SideTitle>
              <SideTop>
                <SideLink $h={40} href="#accueil"><HomeIcon />Accueil</SideLink>
              </SideTop>
              <SideSearch placeholder="Rechercher un paramètre" aria-label="Rechercher un paramètre" />
              <SideHeading>Réseau et Internet</SideHeading>
              <nav>
                {sideItems.map((s) => (
                  <SideLink key={s.name} href="#reseau" $active={s.active}>{s.icon}{s.name}</SideLink>
                ))}
              </nav>
            </Side>
            <SettingsMain>
              <Captions><WindowControls /></Captions>
              <PageTitle>Ethernet</PageTitle>
            </SettingsMain>
          </Settings>
        </Window>

        <Window $x={139} $y={128} $w={786} $h={593}>
          <TitleRow>
            <CenterIcon />
            <TitleText>Centre Réseau et partage</TitleText>
            <WindowControls />
          </TitleRow>
          <NavRow><NavButton $w={30} aria-label="Retour"><ArrowIcon dir="l" /></NavButton></NavRow>
        </Window>

        <Window $x={165} $y={154} $w={786} $h={593}>
          <TitleRow>
            <FolderNetIcon />
            <TitleText>Connexions réseau</TitleText>
            <WindowControls />
          </TitleRow>
          <NavRow>
            <NavButton $w={30} aria-label="Retour"><ArrowIcon dir="l" /></NavButton>
            <NavButton $w={28} aria-label="Suivant"><ArrowIcon dir="r" /></NavButton>
            <NavButton $w={20} aria-label="Récents"><Chevron color="#c8c8c8" w={7} /></NavButton>
            <NavButton $w={22} aria-label="Dossier parent"><ArrowIcon dir="u" /></NavButton>
            <Address>
              <FolderNetIcon />
              <DoubleLeft />
              <Crumb href="#reseau">Réseau et Internet</Crumb>
              <SmallRight />
              <Crumb href="#connexions">Connexions réseau</Crumb>
              <AddressTools>
                <AddressEnd aria-label="Emplacements"><Chevron color="#666" /></AddressEnd>
                <AddressEnd $line aria-label="Actualiser"><RefreshIcon /></AddressEnd>
              </AddressTools>
            </Address>
            <SearchBox>
              <input aria-label="Rechercher dans Connexions réseau" />
              <MagnifyIcon w={12} color="#666" sw={2.2} />
            </SearchBox>
          </NavRow>
          <CommandBar>
            <Command>Organiser <CaretDown color="#1e395b" /></Command>
            <Command $ml={30}>Désactiver ce périphérique réseau</Command>
            <Command $ml={26}>Diagnostiquer cette connexion</Command>
            <Grow />
            <Command aria-label="Affichage"><ViewIcon /></Command>
            <Command $ml={9} aria-label="Options"><CaretDown color="#1e395b" /></Command>
            <Command $ml={21} aria-label="Volet"><PaneIcon /></Command>
            <Command $ml={20} aria-label="Aide"><HelpIcon /></Command>
          </CommandBar>
          <Content>
            <Adapter>
              <AdapterIcon />
              <span>
                <strong>Ethernet0</strong>
                <span>Réseau non identifié</span>
                <span>Intel(R) 82574L</span>
              </span>
            </Adapter>
          </Content>
          <ExplorerStatus>
            <span>1 élément</span>
            <span>1 élément sélectionné</span>
            <Grow />
            <ToolGroup $gap={7} $pad="0px"><ListViewIcon /><ThumbViewIcon /></ToolGroup>
          </ExplorerStatus>
        </Window>

        <Window $x={289} $y={236} $w={438} $h={469}>
          <TitleRow>
            <PlugIcon />
            <TitleText>Propriétés de Ethernet0</TitleText>
            <CaptionButton $w={31} aria-label="Fermer"><CloseIcon /></CaptionButton>
          </TitleRow>
          <Sheet>
            <SheetTab>Gestion de réseau</SheetTab>
            <SheetPanel $pad="14px 14px 21px">
              <span>Connexion</span>
              <DeviceBox><NetCardIcon /><span>Intel(R)</span></DeviceBox>
              <span>Cette connexion</span>
              <ItemList>
                {services.map((s) => (
                  <Item key={s.name}>
                    <Check $small defaultChecked={s.on} aria-label={s.name} />
                    <ServiceIcon kind={s.kind} />
                  </Item>
                ))}
                <ScrollTrack>
                  <ScrollButton aria-label="Défiler à gauche">
                    <svg width="6" height="8" viewBox="0 0 6 8" fill="none" stroke="#444" strokeWidth="1.800"><path d="M5 .5L1.500 4 5 7.500" /></svg>
                  </ScrollButton>
                  <ScrollThumb />
                </ScrollTrack>
              </ItemList>
              <PushButton $w={86} disabled>Installer...</PushButton>
              <Description>
                <legend>Description</legend>
                <p>{"Protocole\nde réseau\nréseaux"}</p>
              </Description>
            </SheetPanel>
          </Sheet>
        </Window>

        <Window $x={344} $y={286} $w={400} $h={455} $focus>
          <TitleRow $focus>
            <TitleText $gap={0}>Propriétés de : Protocole Internet version 4 (TCP/IPv4)</TitleText>
            <CaptionButton $w={30} aria-label="Fermer"><CloseIcon /></CaptionButton>
          </TitleRow>
          <Sheet>
            <SheetTab>Général</SheetTab>
            <SheetPanel $pad="13px 11px 13px 14px">
              <Intro>
                Les paramètres IP peuvent être déterminés automatiquement si votre réseau le permet. Sinon, vous
                devez demander les paramètres IP appropriés à votre administrateur réseau.
              </Intro>
              <Choice $ml={9}><Radio name="ip" />Obtenir une adresse IP automatiquement</Choice>
              <Group $mt={7}>
                <Legend $w={234}>
                  <Choice><Radio name="ip" defaultChecked />Utiliser l’adresse IP suivante :</Choice>
                </Legend>
                <IpField id="ip" label="Adresse IP :" octets={["192", "168", "1", "10"]} />
                <IpField id="mask" label="Masque de sous-réseau :" octets={["255", "255", "255", "0"]} caret />
                <IpField id="gw" label="Passerelle par défaut :" octets={none} />
              </Group>
              <Choice $mt={12} $ml={9} $off><Radio name="dns" disabled />Obtenir les adresses des serveurs DNS automatiquement</Choice>
              <Group $mt={8}>
                <Legend $w={294}>
                  <Choice><Radio name="dns" defaultChecked />Utiliser l’adresse de serveur DNS suivante :</Choice>
                </Legend>
                <IpField id="dns1" label="Serveur DNS préféré :" octets={["192", "168", "1", "5"]} />
                <IpField id="dns2" label="Serveur DNS auxiliaire :" octets={none} />
              </Group>
              <LastRow>
                <LastChoice><Check />Valider les paramètres en quittant</LastChoice>
                <PushButton $w={88}>Avancé...</PushButton>
              </LastRow>
            </SheetPanel>
            <Footer>
              <PushButton $w={73} $default>OK</PushButton>
              <PushButton $w={73}>Annuler</PushButton>
            </Footer>
          </Sheet>
        </Window>
      </Desktop>

      <TaskBar>
        <Task $w={48} aria-label="Démarrer"><WinLogo /></Task>
        <TaskSearch>
          <MagnifyIcon w={17} color="#222" sw={1.3} />
          <input placeholder="Tapez ici pour effectuer une recherche" aria-label="Tapez ici pour effectuer une recherche" />
        </TaskSearch>
        <Task $w={50} aria-label="Vue des tâches"><TaskViewIcon /></Task>
        <Task aria-label="Microsoft Edge"><EdgeIcon size={24} /></Task>
        <Task aria-label="Explorateur"><ExplorerIcon /></Task>
        <Task aria-label="Microsoft Store"><StoreIcon /></Task>
        <Task aria-label="Courrier"><MailIcon /></Task>
        <Task $w={35} $open aria-label="Paramètres"><GearIcon /></Task>
        <Task $w={39} $open $active aria-label="Panneau de configuration"><ControlPanelIcon /></Task>
        <TaskStack />
        <Tray>
          <TrayButton $w={60} aria-label="Actualités"><NewsIcon /></TrayButton>
          <TrayButton $w={26} aria-label="Icônes cachées"><UpIcon /></TrayButton>
          <TrayButton $w={24} aria-label="Réunion"><MeetIcon /></TrayButton>
          <TrayButton $w={24} aria-label="Réseau"><NoNetIcon /></TrayButton>
          <TrayButton $w={24} aria-label="Volume"><SpeakerIcon /></TrayButton>
          <TrayButton $w={34}>FRA</TrayButton>
          <Clock><span>13:03</span><span>22/10/2025</span></Clock>
          <Notify aria-label="2 notifications"><MessageIcon /><Badge>2</Badge></Notify>
          <ShowDesktop />
        </Tray>
      </TaskBar>

      <StatusBar>
        <span>To direct input to this VM, move the mouse pointer inside or press Ctrl+G.</span>
        <StatusIcons>
          <DeviceIcon kind="disk" on />
          <DeviceIcon kind="cd" on />
          <DeviceIcon kind="net" on />
          <DeviceIcon kind="sound" on />
          <DeviceIcon kind="usb" />
          <DeviceIcon kind="cam" />
          <ToolGroup $gap={5} $pad="4px">
            <StatusSeparator />
            <DeviceIcon kind="note" />
            <StatusSeparator />
            <DeviceIcon kind="down" />
          </ToolGroup>
          <Grip />
        </StatusIcons>
      </StatusBar>
    </Host>
  );
}
